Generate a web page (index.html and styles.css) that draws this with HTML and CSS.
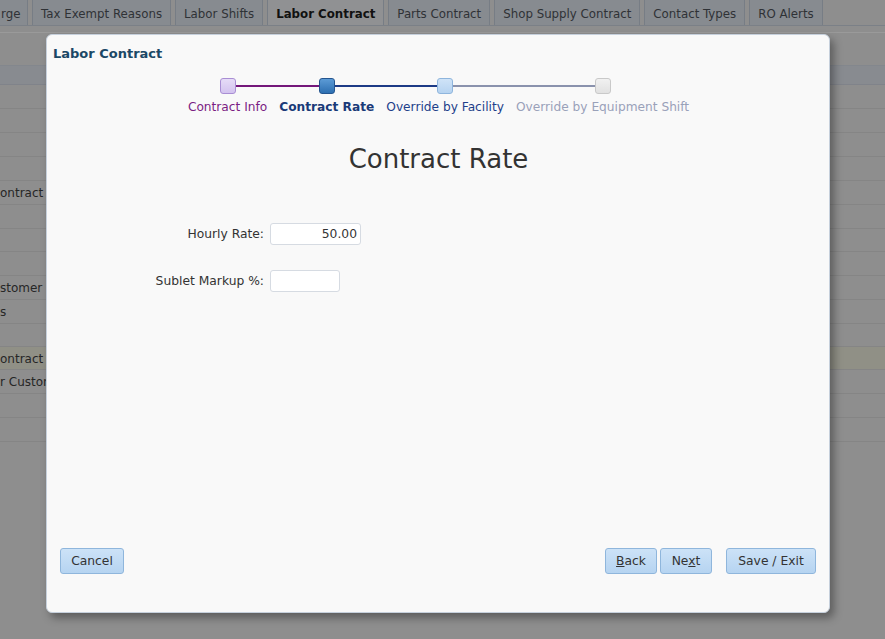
FILE: index.html
```html
<!DOCTYPE html>
<html>
<head>
<meta charset="utf-8">
<link rel="stylesheet" href="styles.css">
</head>
<body>
<div class="page">
  <div class="tabbar">
    <div class="tab tab-cut">rge</div>
    <div class="tab">Tax Exempt Reasons</div>
    <div class="tab">Labor Shifts</div>
    <div class="tab active">Labor Contract</div>
    <div class="tab">Parts Contract</div>
    <div class="tab">Shop Supply Contract</div>
    <div class="tab">Contact Types</div>
    <div class="tab">RO Alerts</div>
  </div>
  <div class="toolbar"></div>
  <div class="grid">
    <div class="grow head"></div>
    <div class="grow"></div>
    <div class="grow"></div>
    <div class="grow"></div>
    <div class="grow"></div>
    <div class="grow">ontract</div>
    <div class="grow"></div>
    <div class="grow h23"></div>
    <div class="grow"></div>
    <div class="grow">stomer</div>
    <div class="grow">s</div>
    <div class="grow h23"></div>
    <div class="grow sel h23">ontract 2</div>
    <div class="grow">r Custom</div>
    <div class="grow"></div>
    <div class="grow"></div>
  </div>
</div>

<div class="modal">
  <div class="modal-title">Labor Contract</div>
  <div class="stepper">
    <div class="step s1"><span class="box"></span><span class="label">Contract Info</span></div>
    <div class="step s2"><span class="box"></span><span class="label">Contract Rate</span></div>
    <div class="step s3"><span class="box"></span><span class="label">Override by Facility</span></div>
    <div class="step s4"><span class="box"></span><span class="label">Override by Equipment Shift</span></div>
  </div>
  <h1 class="heading">Contract Rate</h1>
  <div class="form">
    <div class="frow">
      <label class="flabel">Hourly Rate:</label>
      <div class="input w90">50.00</div>
    </div>
    <div class="frow">
      <label class="flabel">Sublet Markup %:</label>
      <div class="input w70"></div>
    </div>
  </div>
  <div class="footer">
    <button class="btn cancel">Cancel</button>
    <div class="right">
      <button class="btn back"><u>B</u>ack</button>
      <button class="btn next">Ne<u>x</u>t</button>
      <button class="btn save">Save / Exit</button>
    </div>
  </div>
</div>
</body>
</html>
```

FILE: styles.css
```css
* { box-sizing: border-box; }
html, body { margin: 0; padding: 0; }
body {
  width: 885px;
  height: 639px;
  overflow: hidden;
  background: #8e8e8e;
  font-family: "DejaVu Sans", Verdana, sans-serif;
  font-size: 12px;
  color: #2a2d31;
  position: relative;
}
.page { width: 885px; }
.tabbar {
  height: 26px;
  display: flex;
  gap: 4px;
  border-bottom: 1px solid #7b8087;
  overflow: hidden;
}
.tab {
  flex: none;
  height: 29px;
  margin-top: -4px;
  padding: 10px 8px 0;
  background: #878b90;
  border: 1px solid #777d85;
  border-bottom: none;
  border-radius: 3px 3px 0 0;
  color: #2f3236;
  font-size: 11.8px;
  white-space: nowrap;
}
.tab-cut { padding-left: 1px; border-left: none; border-radius: 0 3px 0 0; width: 28px; }
.tab.active { background: #909193; font-weight: bold; color: #111; }
.toolbar {
  height: 33px;
  border-top: 1px solid #9a9a9a;
  margin-top: 6px;
}
.grow {
  height: 24px;
  border-bottom: 1px solid #858585;
  padding: 5px 0 0 0;
  white-space: nowrap;
  color: #262626;
  font-size: 12px;
}
.grow.h23 { height: 23px; }
.grow.head { height: 20px; background: #888b90; border-top: 1px solid #83878d; border-bottom: 1px solid #80838a; }
.grow.sel { background: #909086; }

.modal {
  position: absolute;
  left: 46px;
  top: 34px;
  width: 784px;
  height: 579px;
  background: #f9f9f9;
  border: 1px solid #c6d0dc;
  border-radius: 6px;
  box-shadow: 4px 5px 8px rgba(0,0,0,0.35);
  display: flex;
  flex-direction: column;
  padding: 11px 13px 0 6px;
}
.modal-title {
  font-weight: bold;
  color: #1b4866;
  font-size: 13px;
  height: 20px;
}
.stepper {
  display: flex;
  justify-content: center;
  margin-top: 12px;
  margin-left: 8px;
}
.step {
  position: relative;
  display: flex;
  flex-direction: column;
  align-items: center;
  padding: 0 6px;
}
.step .box {
  width: 16px;
  height: 16px;
  border-radius: 3px;
  position: relative;
  z-index: 1;
}
.step .label { margin-top: 6px; font-size: 12.2px; white-space: nowrap; }
.step::before, .step::after {
  content: "";
  position: absolute;
  top: 7px;
  height: 2px;
}
.step::before { left: 0; right: 50%; }
.step::after { left: 50%; right: 0; }
.s1::before { display: none; }
.s4::after { display: none; }
.s1::after, .s2::before { background: #74177a; }
.s2::after, .s3::before { background: #1d3b86; }
.s3::after, .s4::before { background: #8a92ad; }
.s1 .box { background: linear-gradient(#e6dcf7, #d3c3ef); border: 1px solid #a98ed4; }
.s2 .box { background: linear-gradient(#5c9bd6, #2d6fb1); border: 1px solid #24558f; }
.s3 .box { background: linear-gradient(#cfe3f7, #b6d3f0); border: 1px solid #8eb5dd; }
.s4 .box { background: linear-gradient(#f1f1f1, #e1e1e1); border: 1px solid #c9c9c9; }
.s1 .label { color: #7b1d84; }
.s2 .label { color: #1a3a78; font-weight: bold; }
.s3 .label { color: #1e3f8a; }
.s4 .label { color: #9aa1b9; }

.heading {
  margin: 28px 0 0 8px;
  text-align: center;
  font-weight: normal;
  font-size: 26px;
  line-height: 34px;
  color: #333;
  height: 44px;
}
.form {
  margin-top: 37px;
  display: flex;
  flex-direction: column;
  gap: 25px;
}
.frow { display: flex; align-items: center; gap: 6px; }
.flabel {
  width: 211px;
  text-align: right;
  font-size: 12.3px;
  color: #333;
}
.input {
  height: 22px;
  background: #fff;
  border: 1px solid #d6dbe2;
  border-radius: 3px;
  text-align: right;
  padding: 3px 3px 0 0;
  font-size: 12.3px;
  color: #333;
}
.w90 { width: 91px; }
.w70 { width: 70px; }

.footer {
  margin-top: auto;
  margin-bottom: 38px;
  display: flex;
  justify-content: space-between;
  padding-left: 7px;
}
.right { display: flex; gap: 3px; }
.btn {
  font-family: inherit;
  font-size: 12.3px;
  color: #333;
  height: 26px;
  border: 1px solid #8fb6dc;
  border-radius: 3px;
  background: linear-gradient(#cce2f7, #b6d4f1);
  padding: 0;
}
.cancel { width: 64px; }
.back { width: 52px; }
.next { width: 52px; }
.save { width: 90px; margin-left: 11px; }
```
